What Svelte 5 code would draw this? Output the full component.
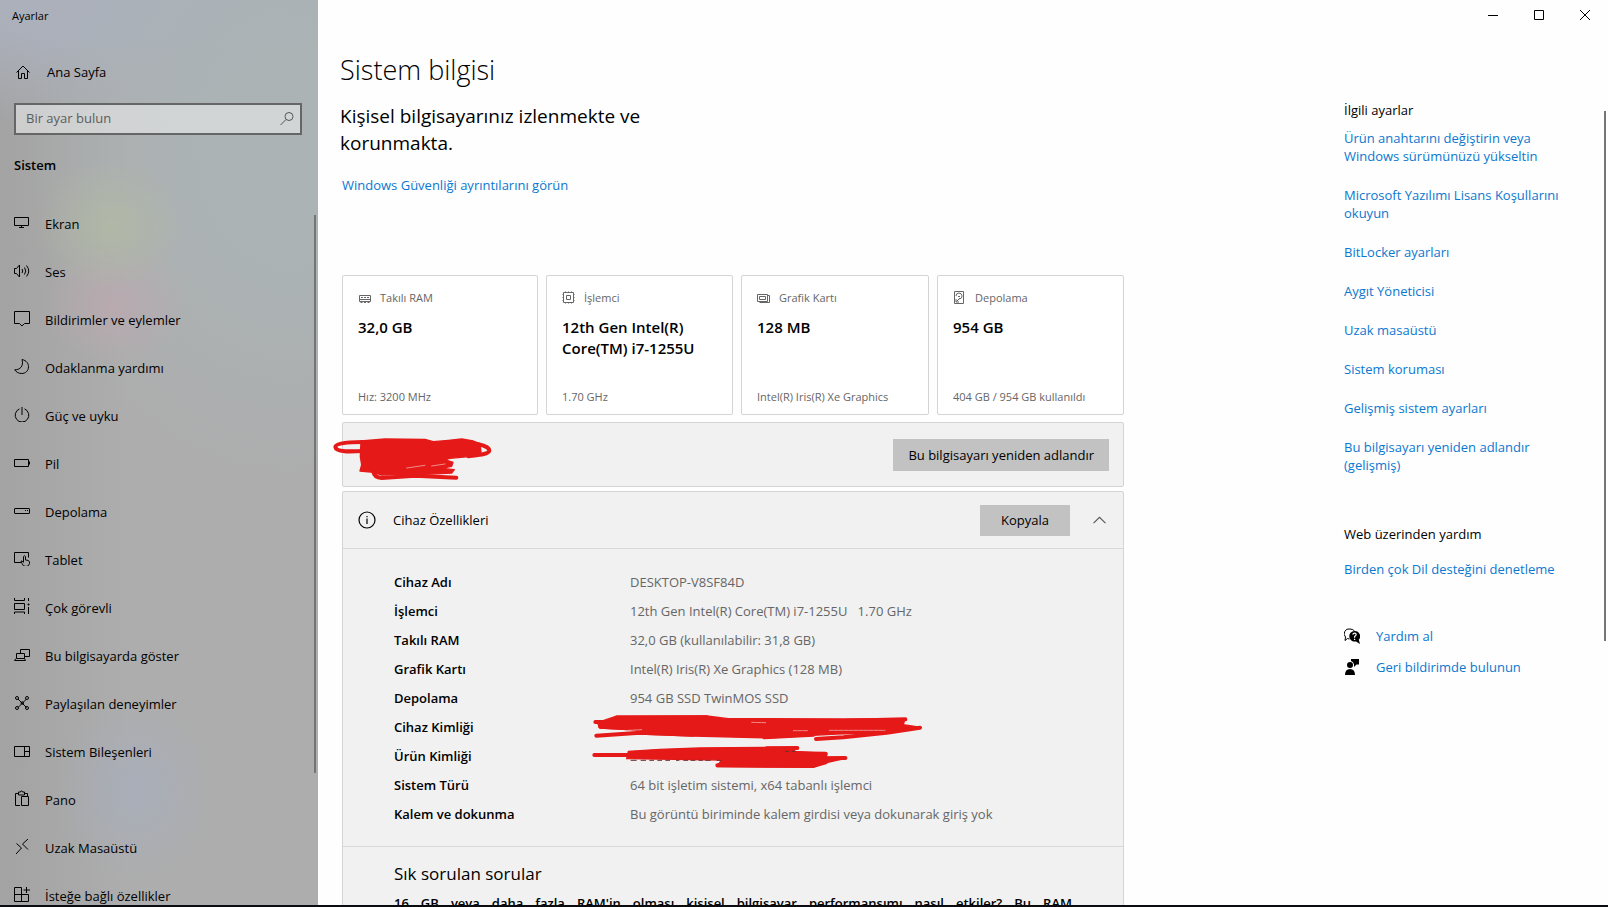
<script lang="ts">
	let search = $state('');
	let open = $state(true);

	type Item = { label: string; icon: string };

	// 16x16 line icons
	const nav: Item[] = [
		{ label: 'Ekran', icon: 'M.5 3.5h14v8H.5zM7.5 11.5v2M5 13.5h5' },
		{
			label: 'Ses',
			icon: 'M.5 6.5h2L5.5 3v12l-3-3.5h-2zM8 7q1.5 2 0 4M10.5 5.5q2.5 3.5 0 7M12.5 3.5q4.5 5.5 0 11'
		},
		{ label: 'Bildirimler ve eylemler', icon: 'M.5 1.5h15v12h-5L8 16l-2.5-2.5h-5z' },
		{
			label: 'Odaklanma yardımı',
			icon: 'M8 1.5c4.5 1 6.5 4 6.5 7.3 0 4-3 6.7-6.8 6.7-3 0-5.7-1.5-7-3.7C6 12 10 8 8 1.5z'
		},
		{ label: 'Güç ve uyku', icon: 'M8 1v8M5.5 2.900a6.800 6.800 0 1 0 5 0' },
		{ label: 'Pil', icon: 'M.5 5.5h14v7H.5zM15.5 7.5v3' },
		{ label: 'Depolama', icon: 'M1 6.5h14q.5 0 .5.5v4q0 .5-.5.5H1q-.5 0-.5-.5V7q0-.5.5-.5zM11 8.5h1M13 8.5h1' },
		{
			label: 'Tablet',
			icon: 'M7 12.5H.5v-10h14v5M9.5 12v-5.500q1-1.500 2 0v3.500q4 0 4 2v1.500q-.5 3-3.500 3t-4-3l-1-2.500q1-.5 2.500 1.500'
		},
		{
			label: 'Çok görevli',
			icon: 'M.5 0v2.5h10V0M.5 5.5h10v6H.5zM.5 16v-2h10v2M14.5 0v3M14.5 9v7M13.5 6.5h2M14.5 5.5v2'
		},
		{
			label: 'Bu bilgisayarda göster',
			icon: 'M6.5 7V3.5h9v7h-5M2.5 7.5h8v5h-8zM2 12.5l-1.500 2h11l-1-2'
		},
		{
			label: 'Paylaşılan deneyimler',
			icon: 'M4 5l8.5 8.5M12.5 5L4 13.5M1.5 4a1.5 1.5 0 1 0 3 0a1.5 1.5 0 1 0-3 0M11.5 4a1.5 1.5 0 1 0 3 0a1.5 1.5 0 1 0-3 0M1.5 14a1.5 1.5 0 1 0 3 0a1.5 1.5 0 1 0-3 0M11.5 14a1.5 1.5 0 1 0 3 0a1.5 1.5 0 1 0-3 0M7 9a1 1 0 1 0 2.5 0a1 1 0 1 0-2.5 0'
		},
		{ label: 'Sistem Bileşenleri', icon: 'M.5 4.5h15v10H.5zM10.5 4.5v10M10.5 9.5h5' },
		{
			label: 'Pano',
			icon: 'M6 15.5H1.5v-12h3V2h2q0-1 1-1t1 1h2v3h-6V3.500M10.5 3.5h3v3M7.5 6.5h7v9h-7z'
		},
		{ label: 'Uzak Masaüstü', icon: 'M2.5 5.5L7.5 10 2 16M14 1L8.5 6l5.5 5.5' },
		{ label: 'İsteğe bağlı özellikler', icon: 'M7.5 15.5v-14h-7v14h14v-7H.5M12.5 1v6M9.5 4H16' }
	];

	const cards = [
		{ name: 'Takılı RAM', value: '32,0 GB', note: 'Hız: 3200 MHz', icon: 'M1.5 5.5h11v6h-11zM2 9.5h10M3 7.5h2M6 7.5h2M9 7.5h2M2.5 12.5h2M6 12.5h2M9.500 12.5h2' },
		{
			name: 'İşlemci',
			value: '12th Gen Intel(R) Core(TM) i7-1255U',
			note: '1.70 GHz',
			icon: 'M1.5 2.5h10v10h-10zM4.5 5.5h4v4h-4zM3.5 1.5v1M6.5 1.5v1M9.5 1.5v1M3.5 12.5v1M6.5 12.5v1M9.5 12.5v1M.5 4.5h1M.5 7.5h1M.5 10.5h1M11.5 4.5h1M11.5 7.5h1M11.5 10.5h1'
		},
		{
			name: 'Grafik Kartı',
			value: '128 MB',
			note: 'Intel(R) Iris(R) Xe Graphics',
			icon: 'M.5 4.5h10v7H.5zM2.5 6.5h6v3h-6zM10.5 5.5h2v7h-10'
		},
		{
			name: 'Depolama',
			value: '954 GB',
			note: '404 GB / 954 GB kullanıldı',
			icon: 'M1.5 1.5h9v12h-9zM3 6a3 3 0 1 1 3.5 3M5 6.5h2M7 8l-3.5 3.5M3 9v3h3'
		}
	];

	const specs = [
		['Cihaz Adı', 'DESKTOP-V8SF84D'],
		['İşlemci', '12th Gen Intel(R) Core(TM) i7-1255U   1.70 GHz'],
		['Takılı RAM', '32,0 GB (kullanılabilir: 31,8 GB)'],
		['Grafik Kartı', 'Intel(R) Iris(R) Xe Graphics (128 MB)'],
		['Depolama', '954 GB SSD TwinMOS SSD'],
		['Cihaz Kimliği', ''],
		['Ürün Kimliği', ''],
		['Sistem Türü', '64 bit işletim sistemi, x64 tabanlı işlemci'],
		['Kalem ve dokunma', 'Bu görüntü biriminde kalem girdisi veya dokunarak giriş yok']
	];

	const related = [
		'Ürün anahtarını değiştirin veya Windows sürümünüzü yükseltin',
		'Microsoft Yazılımı Lisans Koşullarını okuyun',
		'BitLocker ayarları',
		'Aygıt Yöneticisi',
		'Uzak masaüstü',
		'Sistem koruması',
		'Gelişmiş sistem ayarları',
		'Bu bilgisayarı yeniden adlandır (gelişmiş)'
	];
</script>

{#snippet line(d: string)}
	<svg class="icon" viewBox="0 0 16 16" aria-hidden="true"><path {d} /></svg>
{/snippet}

<div class="window">
	<aside class="sidebar">
		<div class="app-title">Ayarlar</div>
		<a class="home" href="#home">
			{@render line('M1.5 8.5L8 2l6.5 6.5M3.5 7v7.5h3v-5h3v5h3V7')}
			<span>Ana Sayfa</span>
		</a>
		<label class="search">
			<input type="text" placeholder="Bir ayar bulun" aria-label="Bir ayar bulun" bind:value={search} />
			<svg class="icon" viewBox="0 0 16 16" aria-hidden="true">
				<path d="M6 5.5a4 4 0 1 0 8 0a4 4 0 1 0-8 0M7 8.5L1.5 14" />
			</svg>
		</label>
		<h2>Sistem</h2>
		<nav>
			{#each nav as item}
				<a href="#{item.label}">
					{@render line(item.icon)}
					<span>{item.label}</span>
				</a>
			{/each}
			<div class="thumb"></div>
		</nav>
	</aside>

	<div class="page">
		<div class="controls">
			<button aria-label="Simge durumuna küçült"><svg viewBox="0 0 10 10"><path d="M0 5.5h10" /></svg></button>
			<button aria-label="Ekranı kapla"><svg viewBox="0 0 10 10"><path d="M.5.5h9v9h-9z" /></svg></button>
			<button aria-label="Kapat"><svg viewBox="0 0 10 10"><path d="M0 0l10 10M10 0L0 10" /></svg></button>
		</div>

		<div class="columns">
			<main>
				<h1>Sistem bilgisi</h1>
				<p class="status">Kişisel bilgisayarınız izlenmekte ve korunmakta.</p>
				<a class="security" href="#security">Windows Güvenliği ayrıntılarını görün</a>

				<div class="cards">
					{#each cards as card}
						<section class="card">
							<div class="card-name">
								{@render line(card.icon)}
								<span>{card.name}</span>
							</div>
							<div class="card-value">{card.value}</div>
							<div class="card-note">{card.note}</div>
						</section>
					{/each}
				</div>

				<section class="panel rename">
					<svg class="ink ink-name" viewBox="21 513 480 138" aria-hidden="true">
						<path
							class="fill"
							d="M108 528L180 522L300 523L325 530L370 526L410 522L445 528L465 536L468 562L440 574L375 580L360 584L384 592L380 604L350 610L388 614L380 624L300 628L170 630L145 622L105 618L110 600L106 575z"
						/>
						<path d="M112 531C70 531 31 534 31 546C33 562 75 560 115 558" />
						<path d="M460 538C480 542 493 550 493 557C490 568 460 570 430 574" />
						<path d="M145 620Q148 638 170 639L270 632L394 638" />
						<path class="gap" d="M245 609L300 601M320 603L360 597" />
					</svg>
					<button class="gray">Bu bilgisayarı yeniden adlandır</button>
				</section>

				<section class="panel">
					<header>
						<svg class="info" viewBox="0 0 18 18" aria-hidden="true">
							<circle cx="9" cy="9" r="8" />
							<path d="M9 7.5v5.5M9 5v1.300" />
						</svg>
						<h3>Cihaz Özellikleri</h3>
						<button class="gray copy">Kopyala</button>
						<button class="toggle" aria-label="Cihaz Özellikleri" aria-expanded={open} onclick={() => (open = !open)}>
							<svg viewBox="0 0 12 8"><path d={open ? 'M.5 6.5L6 1l5.5 5.5' : 'M.5 1L6 6.5L11.5 1'} /></svg>
						</button>
					</header>
					{#if open}
						<div class="specs">
							<dl>
								{#each specs as [name, value]}
									<dt>{name}</dt>
									<dd>{value}</dd>
								{/each}
							</dl>
							<svg class="ink ink-ids" viewBox="93 69 1002 168" aria-hidden="true">
								<path
									class="fill"
									d="M165 80L440 78L505 86L860 87L1035 86L1030 104L1083 112L980 128L830 132L760 136L620 144L400 138L240 132L260 122L120 114L112 98z"
								/>
								<path d="M170 82L440 82M106 96L200 96M120 110L260 118M109 137L240 128L400 134M613 142L760 134M768 147L850 142L980 128L1080 113M860 92L1036 88" />
								<path class="gap" d="M205 121L245 119M575 97L617 98M700 122L742 122M808 121L975 121" stroke-dasharray="12 3" />
								<path class="fill" d="M205 184L300 178L420 174L620 172L715 172L700 184L800 190L800 205L860 204L800 218L760 231L470 230L485 210L200 206z" />
								<path d="M103 195L220 195M620 175L712 174M700 190L797 191M760 205L856 204M472 226L758 228L797 217" />
								<path class="remnant" d="M212 211h18M242 211h16M268 211h14M292 211h14M316 211h14M348 211h10M370 211h14M392 211h14M416 211h12M436 211h16M470 211h14M675 184h12M695 184h12" />
							</svg>
						</div>
						<div class="faq">
							<h4>Sık sorulan sorular</h4>
							<p>16 GB veya daha fazla RAM'in olması kişisel bilgisayar performansımı nasıl etkiler? Bu RAM</p>
						</div>
					{/if}
				</section>
			</main>

			<aside class="related">
				<h2>İlgili ayarlar</h2>
				<ul>
					{#each related as link}
						<li><a href="#{link}">{link}</a></li>
					{/each}
				</ul>
				<h2 class="web">Web üzerinden yardım</h2>
				<a href="#language">Birden çok Dil desteğini denetleme</a>
				<div class="help">
					<a href="#help">
						<svg viewBox="0 0 16 16" aria-hidden="true">
							<path class="thin" d="M5.500 11L3.500 10.500 1 12.500 1.500 9A4.800 4.800 0 0 1 6 1Q9 1 10.5 3" />
							<path d="M10.5 3a5.300 5.300 0 1 0 1.5 10.400L16 16l-1.200-4.200A5.300 5.300 0 0 0 10.5 3z" />
							<path class="mark" d="M8.800 6.700q.3-1.500 1.800-1.500t1.600 1.400q0 1-1.600 1.900v1.200M10.600 10.800v1.300" />
						</svg>
						<span>Yardım al</span>
					</a>
					<a href="#feedback">
						<svg viewBox="0 0 16 16" aria-hidden="true">
							<path d="M7 0h8v5.5h-2.500L10 8V5.5Q9.5 2.5 7 2zM6 3a3 3 0 1 1 0 6a3 3 0 0 1 0-6zM1 16q0-6 5-6t5 6z" />
						</svg>
						<span>Geri bildirimde bulunun</span>
					</a>
				</div>
			</aside>
		</div>
		<div class="thumb page-thumb"></div>
	</div>
</div>

<style>
	:global(body) {
		overflow: hidden;
	}

	.window {
		--link: #0a78d0;
		display: flex;
		box-sizing: border-box;
		height: 100vh;
		overflow: hidden;
		border-bottom: 2px solid #0a0c10;
		background: #fefefe;
		color: #000;
		font: 13px/18px 'Segoe UI', 'Open Sans', 'Noto Sans', sans-serif;
	}

	h1,
	h2,
	h3,
	h4,
	p,
	ul,
	dl,
	dd {
		margin: 0;
		padding: 0;
		font-size: inherit;
		font-weight: 400;
	}

	a {
		color: inherit;
		text-decoration: none;
	}

	button {
		border: 0;
		padding: 0;
		background: none;
		color: inherit;
		font: inherit;
	}

	svg {
		display: block;
		fill: none;
		stroke: currentColor;
	}

	.icon {
		flex: none;
		width: 16px;
		height: 16px;
	}

	.sidebar {
		display: flex;
		flex-direction: column;
		flex: none;
		width: 318px;
		background:
			radial-gradient(ellipse 75px 65px at 110px 225px, rgb(180 190 160 / 60%), transparent),
			radial-gradient(ellipse 75px 60px at 115px 305px, rgb(190 168 176 / 70%), transparent),
			radial-gradient(ellipse 80px 90px at 135px 790px, rgb(166 174 190 / 70%), transparent),
			radial-gradient(ellipse 260px 330px at 290px 150px, #abb3b5 30%, transparent),
			radial-gradient(ellipse 400px 130px at 120px 0, #abb0bb 30%, transparent),
			linear-gradient(90deg, #a3a3a3, #adadad 40%);
	}

	.app-title {
		padding: 7px 12px;
		font-size: 11px;
	}

	.home {
		display: flex;
		align-items: center;
		gap: 16px;
		height: 40px;
		margin-top: 20px;
		padding-left: 15px;
	}

	.search {
		display: flex;
		align-items: center;
		box-sizing: border-box;
		height: 32px;
		margin: 11px 16px 0 14px;
		border: 2px solid #666;
		padding: 0 5px 0 10px;
		background: rgb(255 255 255 / 45%);
		color: #555;
	}

	.search input {
		flex: 1;
		min-width: 0;
		border: 0;
		padding: 0 0 2px;
		outline: 0;
		background: none;
		color: #000;
		font: inherit;
	}

	.search input::placeholder {
		color: #5c5c5c;
		opacity: 1;
	}

	.sidebar h2 {
		margin: 21px 14px 0;
		font-weight: 600;
	}

	nav {
		position: relative;
		flex: 1;
		min-height: 0;
		margin-top: 26px;
		overflow: hidden;
	}

	nav a {
		display: flex;
		align-items: center;
		gap: 15px;
		height: 48px;
		padding-left: 14px;
	}

	nav .icon {
		margin-bottom: 4px;
	}

	.thumb {
		position: absolute;
		top: 15px;
		right: 2px;
		width: 2px;
		height: 558px;
		background: #757575;
	}

	.page {
		position: relative;
		flex: 1;
		min-width: 0;
	}

	.page-thumb {
		top: 111px;
		height: 530px;
	}

	.controls {
		display: flex;
		justify-content: flex-end;
	}

	.controls button {
		display: grid;
		place-items: center;
		width: 46px;
		height: 30px;
	}

	.controls svg {
		width: 10px;
		height: 10px;
	}

	.columns {
		display: flex;
		justify-content: space-between;
		padding-left: 24px;
	}

	main {
		flex: 0 1 782px;
		min-width: 0;
		padding-top: 21px;
	}

	h1 {
		margin-left: -2px;
		font-size: 27px;
		font-weight: 300;
		line-height: 38px;
	}

	.status {
		max-width: 340px;
		margin: 14px 0 0 -2px;
		font-size: 19px;
		line-height: 27px;
	}

	.security {
		display: block;
		margin-top: 19px;
		color: var(--link);
	}

	.cards {
		display: grid;
		grid-template-columns: 196fr 187fr 188fr 187fr;
		gap: 8px;
		margin-top: 81px;
	}

	.card {
		display: flex;
		flex-direction: column;
		box-sizing: border-box;
		height: 140px;
		border: 1px solid #d4d4d4;
		border-radius: 2px;
		padding: 13px 15px 8px;
		background: #fff;
	}

	.card-name,
	.card-note {
		color: #666;
		font-size: 11px;
	}

	.card-name {
		display: flex;
		align-items: center;
		gap: 6px;
	}

	.card-value {
		margin-top: 10px;
		font-size: 15px;
		font-weight: 600;
		line-height: 21px;
	}

	.card-note {
		margin-top: auto;
		white-space: nowrap;
	}

	.panel {
		margin-top: 4px;
		border: 1px solid #d4d4d4;
		border-radius: 2px;
		background: #f1f1f1;
	}

	.rename {
		position: relative;
		display: flex;
		align-items: center;
		justify-content: flex-end;
		height: 63px;
		margin-top: 7px;
		padding-right: 14px;
	}

	.gray {
		height: 32px;
		padding: 0 15px;
		background: #c2c2c2;
	}

	.panel header {
		display: flex;
		align-items: center;
		height: 56px;
		border-bottom: 1px solid #d8d8d8;
		padding: 0 17px 0 15px;
	}

	.info {
		width: 18px;
		height: 18px;
		stroke-width: 1.2;
	}

	.panel h3 {
		margin-left: 17px;
	}

	.copy {
		width: 90px;
		height: 31px;
		margin-left: auto;
	}

	.toggle {
		margin-left: 23px;
	}

	.toggle svg {
		width: 13px;
		height: 9px;
		stroke: #555;
	}

	.specs {
		position: relative;
		padding: 19px 0 17px 51px;
		border-bottom: 1px solid #d8d8d8;
	}

	dl {
		display: grid;
		grid-template-columns: 236px 1fr;
		line-height: 29px;
	}

	dt {
		font-weight: 600;
	}

	dd {
		color: #666;
		white-space: pre;
	}

	.ink {
		position: absolute;
		stroke: #e61919;
		stroke-width: 12;
		stroke-linecap: round;
		stroke-linejoin: round;
	}

	.ink .fill {
		fill: #e61919;
		stroke-width: 4;
	}

	.ink .gap {
		stroke: #f4c4c4;
		stroke-width: 2;
	}

	.ink .remnant {
		stroke: #6a3030;
		stroke-width: 3;
		stroke-linecap: butt;
	}

	.ink-name {
		top: 13px;
		left: -11px;
		width: 160px;
		height: 46px;
	}

	.ink-ids {
		top: 164px;
		left: 248px;
		width: 334px;
		height: 56px;
	}

	.faq {
		padding: 15px 51px 16px;
	}

	.faq h4 {
		font-size: 17px;
		line-height: 24px;
	}

	.faq p {
		margin-top: 8px;
		font-weight: 600;
		text-align: justify;
		text-align-last: justify;
	}

	.related {
		flex: none;
		box-sizing: border-box;
		width: 264px;
		padding: 71px 36px 0 0;
	}

	.related a {
		color: var(--link);
	}

	.related ul {
		display: grid;
		gap: 21px;
		margin-top: 10px;
		list-style: none;
	}

	.related .web {
		margin: 51px 0 17px;
	}

	.help {
		display: grid;
		gap: 13px;
		margin-top: 49px;
	}

	.help a {
		display: flex;
		align-items: center;
		gap: 16px;
	}

	.help svg {
		width: 16px;
		height: 16px;
		fill: #000;
		stroke: none;
	}

	.help .thin {
		fill: none;
		stroke: #000;
	}

	.help .mark {
		fill: none;
		stroke: #fff;
		stroke-width: 1.2;
	}
</style>
